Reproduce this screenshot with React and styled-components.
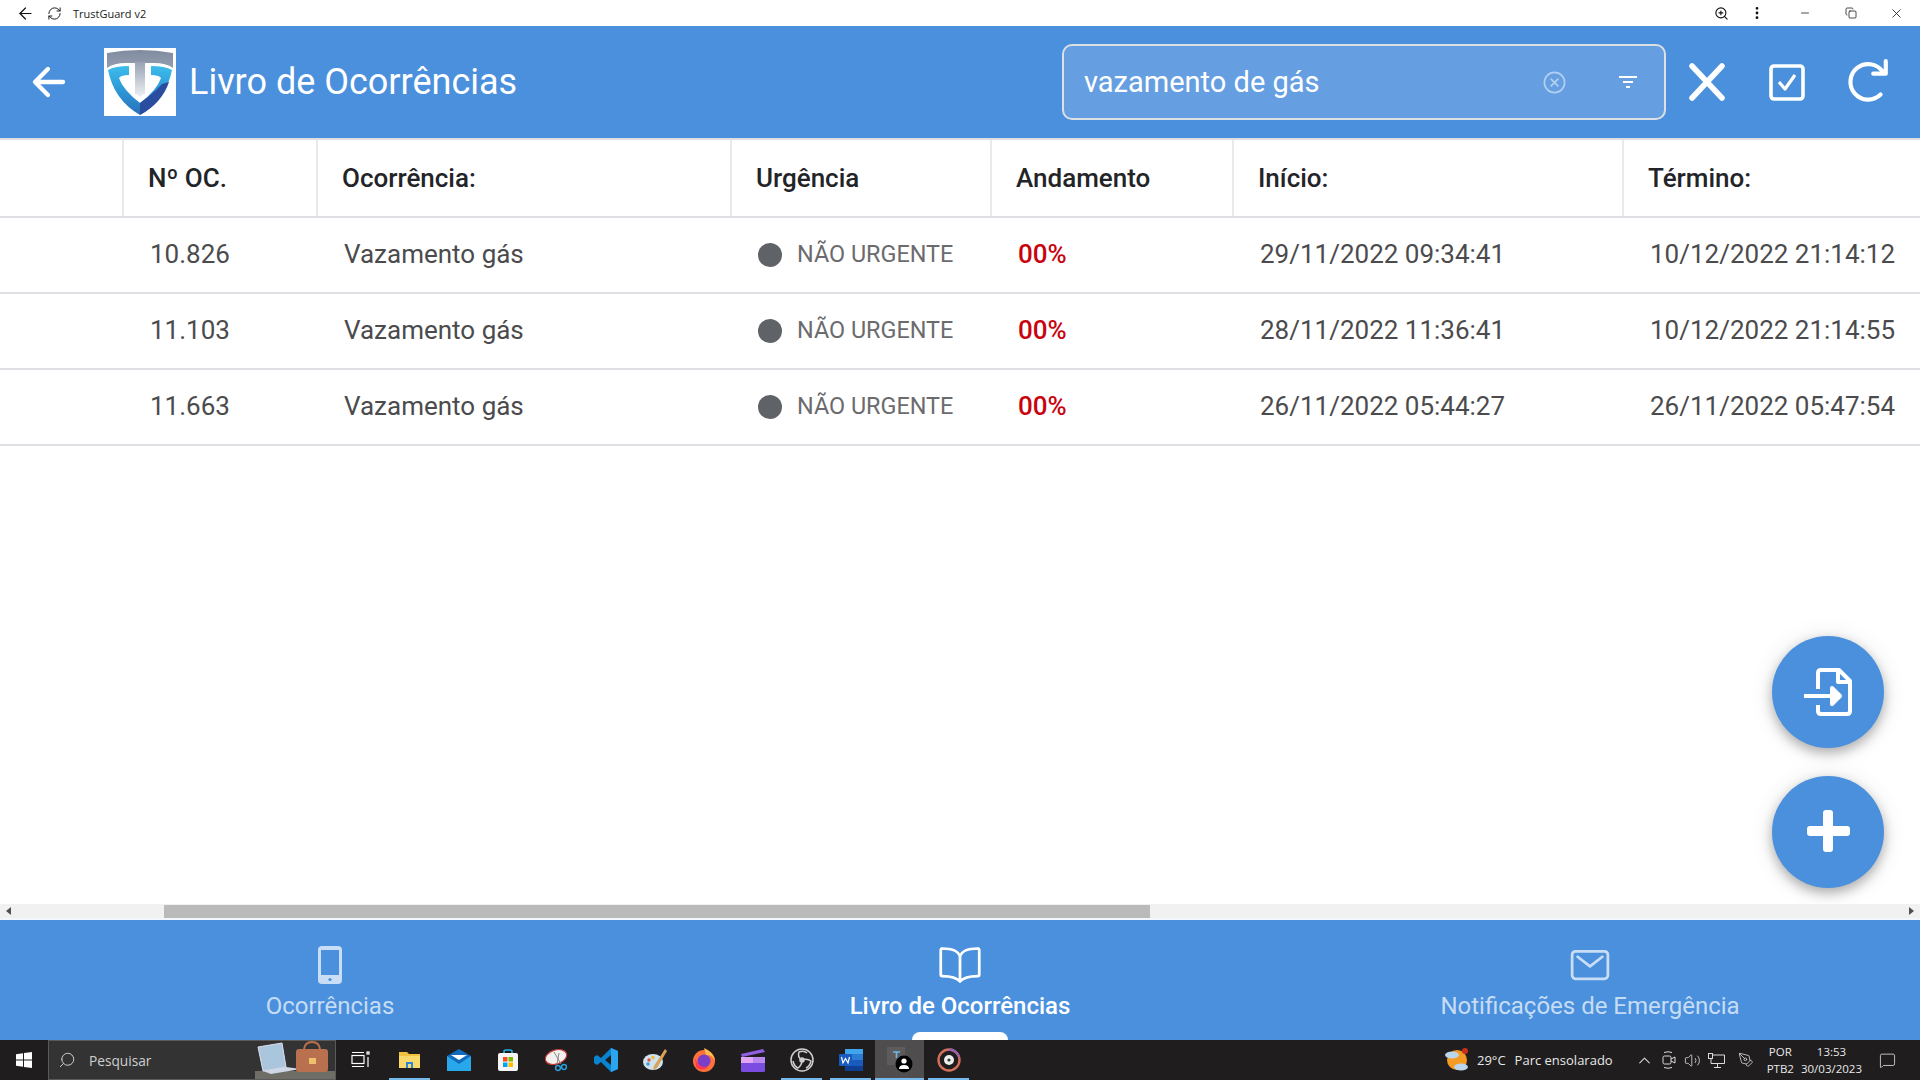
import React from "react";
import styled, { createGlobalStyle } from "styled-components";
import {
  IoArrowBack,
  IoCloseCircleOutline,
  IoBookOutline,
  IoMailOutline,
} from "react-icons/io5";
import {
  ArrowLeft,
  RefreshCw,
  ZoomIn,
  EllipsisVertical,
  Minus,
  Copy,
  X,
  Search,
  ChevronUp,
  Volume2,
  MessageSquare,
  PenTool,
} from "lucide-react";

const GlobalStyle = createGlobalStyle`
  * { box-sizing: border-box; }
  html, body { margin: 0; padding: 0; background: #fff; overflow: hidden; }
  body { font-family: Roboto, "Liberation Sans", sans-serif; }
`;

const Page = styled.div`
  display: flex;
  flex-direction: column;
  width: 1920px;
  height: 1080px;
`;

const TitleBar = styled.div`
  display: flex;
  align-items: center;
  height: 26px;
  flex: none;
  background: #fff;
  color: #111;
  padding: 0 14px 0 16px;
`;

const TitleBarText = styled.span`
  font-family: "Open Sans", "Liberation Sans", sans-serif;
  font-size: 11px;
  color: #222;
  margin-left: 9px;
`;

const TitleBarButton = styled.span`
  display: flex;
  align-items: center;
  justify-content: center;
  width: ${(p) => p.$w || 20}px;
  margin-left: ${(p) => p.$ml || 0}px;
`;

const Spacer = styled.div`
  flex: 1;
`;

const Header = styled.header`
  display: flex;
  align-items: center;
  height: 112px;
  flex: none;
  background: #4a90dd;
  color: #fff;
  padding-left: 26px;
`;

const BackButton = styled.span`
  display: flex;
  font-size: 46px;
  width: 78px;
`;

const LogoBox = styled.div`
  width: 72px;
  height: 68px;
  background: #fff;
  flex: none;
`;

const PageTitle = styled.h1`
  margin: 0 0 0 13px;
  font-size: 36px;
  font-weight: 400;
  flex: 1;
`;

const SearchBox = styled.div`
  display: flex;
  align-items: center;
  width: 604px;
  height: 76px;
  border: 2px solid #dcdfe3;
  border-radius: 10px;
  background: #659fe1;
  padding: 0 20px;
`;

const SearchText = styled.span`
  flex: 1;
  font-size: 29px;
`;

const ClearIcon = styled.span`
  display: flex;
  font-size: 27px;
  opacity: 0.5;
  margin-right: 49px;
  position: relative;
  left: -2px;
`;

const FilterIcon = styled.svg`
  width: 18px;
  height: 12px;
  margin-right: 7px;
`;

const HeaderActions = styled.div`
  display: flex;
  align-items: center;
  width: 254px;
  padding-left: 1px;
`;

const HeaderAction = styled.span`
  display: flex;
  justify-content: center;
  width: 80px;
`;

const Content = styled.main`
  position: relative;
  flex: 1;
  overflow: hidden;
  background: #fff;
`;

const columns = "122px 194px 414px 260px 242px 390px 298px";

const HeadRow = styled.div`
  display: grid;
  grid-template-columns: ${columns};
  height: 80px;
  border-top: 2px solid #dfe0e4;
  border-bottom: 2px solid #dfe0e4;
`;

const HeadCell = styled.div`
  display: flex;
  align-items: center;
  padding-left: 24px;
  font-size: 26px;
  font-weight: 500;
  color: #222428;
  border-left: ${(p) => (p.$first ? "0" : "2px solid #e9e9ea")};
`;

const Row = styled.div`
  display: grid;
  grid-template-columns: ${columns};
  height: 76px;
  border-bottom: 2px solid #dfe0e4;
`;

const Cell = styled.div`
  display: flex;
  align-items: center;
  padding: 0 0 2px 28px;
  font-size: 26px;
  color: #4b4b4d;
  white-space: nowrap;
`;

const UrgencyDot = styled.span`
  width: 24px;
  height: 24px;
  border-radius: 50%;
  background: #5f6368;
  margin: 1px 15px 0 0;
  flex: none;
`;

const UrgencyLabel = styled.span`
  font-size: 23.4px;
  color: #6b6b6e;
`;

const Percent = styled.span`
  font-weight: 500;
  color: #c8030f;
`;

const Fab = styled.button`
  position: absolute;
  right: 36px;
  bottom: ${(p) => p.$bottom}px;
  width: 112px;
  height: 112px;
  border: 0;
  border-radius: 50%;
  background: #4a90dd;
  color: #fff;
  display: flex;
  align-items: center;
  justify-content: center;
  box-shadow: 0 5px 12px rgba(0, 0, 0, 0.28), 0 2px 24px rgba(0, 0, 0, 0.1);
`;

const ScrollTrack = styled.div`
  display: flex;
  align-items: center;
  justify-content: space-between;
  height: 16px;
  flex: none;
  background: #f1f1f1;
  border-bottom: 2px solid #f4f8fc;
  padding: 0 6px;
  position: relative;
`;

const ScrollThumb = styled.div`
  position: absolute;
  left: 164px;
  top: 1px;
  width: 986px;
  height: 13px;
  background: #bababa;
`;

const ScrollArrow = styled.span`
  width: 0;
  height: 0;
  border-top: 4px solid transparent;
  border-bottom: 4px solid transparent;
  border-left: ${(p) => (p.$right ? "5px solid #505050" : "0")};
  border-right: ${(p) => (p.$right ? "0" : "5px solid #505050")};
`;

const BottomNav = styled.nav`
  display: grid;
  grid-template-columns: repeat(3, 1fr);
  height: 120px;
  flex: none;
  background: #4a90dd;
  padding: 0 15px;
`;

const Tab = styled.div`
  position: relative;
  display: flex;
  flex-direction: column;
  align-items: center;
  padding-top: 25px;
  color: ${(p) => (p.$active ? "#fff" : "rgba(255, 255, 255, 0.7)")};
`;

const TabIcon = styled.span`
  display: flex;
  align-items: center;
  justify-content: center;
  height: 40px;
  font-size: 44px;
`;

const TabLabel = styled.span`
  margin-top: 7px;
  font-size: 24px;
  font-weight: ${(p) => (p.$active ? 500 : 400)};
`;

const TabIndicator = styled.span`
  position: absolute;
  bottom: 0;
  left: 50%;
  width: 96px;
  height: 8px;
  margin-left: -48px;
  background: #fff;
  border-radius: 8px 8px 0 0;
`;

const Taskbar = styled.footer`
  display: flex;
  align-items: center;
  height: 40px;
  flex: none;
  background: #1f1d1e;
  color: #e8e8e8;
  font-family: "Open Sans", "Noto Sans", sans-serif;
  font-size: 13px;
`;

const StartButton = styled.div`
  display: flex;
  align-items: center;
  justify-content: center;
  width: 48px;
  height: 40px;
`;

const TaskSearch = styled.div`
  position: relative;
  display: flex;
  align-items: center;
  width: 288px;
  height: 40px;
  background: #333;
  border: 1px solid #5a5a5a;
  padding-left: 9px;
  color: #cfcfcf;
  font-size: 13.7px;
  gap: 13px;
`;

const SearchArt = styled.svg`
  position: absolute;
  right: 0;
  bottom: 0;
`;

const TaskItem = styled.div`
  position: relative;
  display: flex;
  align-items: center;
  justify-content: center;
  width: 49px;
  height: 40px;
  background: ${(p) => (p.$active ? "#4f4d4e" : "transparent")};
  &::after {
    content: "";
    display: ${(p) => (p.$open ? "block" : "none")};
    position: absolute;
    left: ${(p) => (p.$active ? 0 : 4)}px;
    right: ${(p) => (p.$active ? 0 : 4)}px;
    bottom: 0;
    height: 2px;
    background: #76b9ed;
  }
`;

const Tray = styled.div`
  display: flex;
  align-items: center;
  margin-left: auto;
  height: 40px;
  padding-right: 21px;
`;

const WeatherText = styled.span`
  font-size: 13px;
  margin-left: ${(p) => p.$ml || 0}px;
  white-space: nowrap;
`;

const TrayIcon = styled.span`
  display: flex;
  justify-content: center;
  width: 24px;
  margin-left: ${(p) => p.$ml || 0}px;
  color: #dcdcdc;
`;

const TrayStack = styled.div`
  display: flex;
  flex-direction: column;
  align-items: center;
  font-size: 11.5px;
  line-height: 17px;
  margin-left: ${(p) => p.$ml || 0}px;
`;

const rows = [
  ["10.826", "29/11/2022 09:34:41", "10/12/2022 21:14:12"],
  ["11.103", "28/11/2022 11:36:41", "10/12/2022 21:14:55"],
  ["11.663", "26/11/2022 05:44:27", "26/11/2022 05:47:54"],
];

function Logo() {
  return (
    <svg width="72" height="68" viewBox="0 0 72 68">
      <defs>
        <linearGradient id="metal" x1="0" y1="0" x2="0" y2="1">
          <stop offset="0" stopColor="#7f8ba0" />
          <stop offset="1" stopColor="#b5bcc8" />
        </linearGradient>
        <linearGradient id="stem" x1="0" y1="0" x2="0" y2="1">
          <stop offset="0" stopColor="#98a2b3" />
          <stop offset="1" stopColor="#eef0f4" />
        </linearGradient>
        <linearGradient id="sky" x1="0" y1="0" x2="0" y2="1">
          <stop offset="0" stopColor="#3dbdec" />
          <stop offset="0.55" stopColor="#2c93d4" />
          <stop offset="1" stopColor="#2a70b9" />
        </linearGradient>
      </defs>
      <path d="M3 5 Q36 -1 69 5 L69 20 Q62 15 50 15 L41 15 L41 45 L36 48 L31 45 L31 15 L22 15 Q10 15 3 20 Z" fill="url(#metal)" />
      <path d="M31 14 H41 V45 L36 49 L31 45 Z" fill="url(#stem)" />
      <path d="M4 22 Q11 18 25 18 L25 27 Q17 27 15 30 Q19 42 36 55 L36 67 Q10 52 4 22 Z" fill="url(#sky)" />
      <path d="M68 22 Q61 18 47 18 L47 27 Q55 27 57 30 Q53 42 36 55 L36 67 Q62 52 68 22 Z" fill="url(#sky)" />
      <path d="M36 55 Q50 45 58 36 L65 34 Q58 55 36 67 Z" fill="#2b4d9f" />
    </svg>
  );
}

function CloseIcon() {
  return (
    <svg width="38" height="38" viewBox="0 0 38 38" fill="none" stroke="#fff" strokeWidth="5.5" strokeLinecap="round">
      <path d="M4 3 L34 35 M34 3 L4 35" />
    </svg>
  );
}

function CheckboxIcon() {
  return (
    <svg width="36" height="37" viewBox="0 0 36 37" fill="none" stroke="#fff" strokeLinejoin="round">
      <rect x="2" y="2" width="32" height="33" rx="3" strokeWidth="3.6" />
      <path d="M10 18 L16 25 L26 11" strokeWidth="3.2" />
    </svg>
  );
}

function RefreshIcon() {
  return (
    <svg width="48" height="48" viewBox="0 0 46 46" fill="none" stroke="#fff" strokeWidth="4" strokeLinecap="round" strokeLinejoin="round">
      <path d="M36 35 A17 17 0 1 1 38 13" />
      <path d="M41 3 V15 H29" />
    </svg>
  );
}

function FileArrow() {
  return (
    <svg width="48" height="50" viewBox="0 0 48 50" fill="none" stroke="#fff" strokeWidth="4" strokeLinejoin="round">
      <path d="M14 22 V6 Q14 3 17 3 H35 L46 14 V44 Q46 47 43 47 H17 Q14 47 14 44 V38" />
      <path d="M34 3 V15 H46" />
      <path d="M0 29 H30" />
      <path d="M28 21 L36 29 L28 37 Z" fill="#fff" />
    </svg>
  );
}

function PlusIcon() {
  return (
    <svg width="44" height="44" viewBox="0 0 44 44">
      <rect x="17" y="0" width="10" height="42" rx="3" fill="#fff" />
      <rect x="1" y="16" width="43" height="10" rx="3" fill="#fff" />
    </svg>
  );
}

function PhoneIcon() {
  return (
    <svg width="24" height="38" viewBox="0 0 24 38">
      <path fillRule="evenodd" d="M4 0 H20 Q24 0 24 4 V34 Q24 38 20 38 H4 Q0 38 0 34 V4 Q0 0 4 0 Z M3 4 V29 H21 V4 Z" fill="currentColor" />
      <circle cx="12" cy="33.5" r="1.6" fill="#4a90dd" />
    </svg>
  );
}

function WindowsIcon() {
  return (
    <svg width="16" height="16" viewBox="0 0 16 16" fill="#fff">
      <path d="M0 2.3 7 1.3 V7.6 H0 Z M8 1.1 16 0 V7.6 H8 Z M0 8.4 H7 V14.7 L0 13.7 Z M8 8.4 H16 V16 L8 14.9 Z" />
    </svg>
  );
}

function TaskView() {
  return (
    <svg width="20" height="18" viewBox="0 0 20 18" fill="none" stroke="#fff" strokeWidth="1.2">
      <rect x="1" y="4.5" width="12" height="8" />
      <path d="M1 1.5 H13 M1 15.5 H13" />
      <rect x="16" y="1" width="2" height="2" />
      <path d="M17 6 V16" />
    </svg>
  );
}

function Explorer() {
  return (
    <svg width="22" height="18" viewBox="0 0 22 18">
      <path d="M0 1 H8 L10 3 H21 V17 H0 Z" fill="#f2c23e" />
      <path d="M0 5 H21 V17 H0 Z" fill="#fbd96a" />
      <path d="M7 17 V11 H14 V17 H12 V13 H9 V17 Z" fill="#2b87d8" />
    </svg>
  );
}

function MailIcon() {
  return (
    <svg width="24" height="22" viewBox="0 0 24 22">
      <path d="M0 7 L12 0 L24 7 V22 H0 Z" fill="#0f6cbd" />
      <path d="M0 7 L12 15 L24 7 V22 H0 Z" fill="#28a8ea" />
      <path d="M4 6 H20 L12 11 Z" fill="#fff" />
    </svg>
  );
}

function StoreIcon() {
  return (
    <svg width="20" height="22" viewBox="0 0 20 22">
      <path d="M6 5 V2 Q6 1 8 1 H12 Q14 1 14 2 V5" fill="none" stroke="#25b4e8" strokeWidth="1.6" />
      <rect x="0" y="4" width="20" height="18" rx="2" fill="#f5f5f5" />
      <rect x="5" y="8" width="4.5" height="4.5" fill="#f25022" />
      <rect x="10.5" y="8" width="4.5" height="4.5" fill="#7fba00" />
      <rect x="5" y="13.5" width="4.5" height="4.5" fill="#00a4ef" />
      <rect x="10.5" y="13.5" width="4.5" height="4.5" fill="#ffb900" />
    </svg>
  );
}

function SnipIcon() {
  return (
    <svg width="24" height="24" viewBox="0 0 24 24">
      <ellipse cx="11" cy="9" rx="11" ry="7" fill="#f4f0ee" stroke="#c43d3d" strokeWidth="1.2" transform="rotate(-18 11 9)" />
      <path d="M9 4 L16 16 M14 5 L12 16" stroke="#888" strokeWidth="1" />
      <circle cx="13" cy="20" r="2.4" fill="none" stroke="#2b9cd8" strokeWidth="1.5" />
      <circle cx="19" cy="19" r="2.4" fill="none" stroke="#2b9cd8" strokeWidth="1.5" />
    </svg>
  );
}

function VsCode() {
  return (
    <svg width="24" height="24" viewBox="0 0 24 24">
      <path d="M17 0 L24 3 V21 L17 24 L7 14 L3 17 L0 15 V9 L3 7 L7 10 Z M17 7 L11 12 L17 17 Z" fill="#0a84d0" />
      <path d="M17 0 L24 3 V21 L17 24 Z" fill="#2aa5ee" />
    </svg>
  );
}

function PaintIcon() {
  return (
    <svg width="24" height="24" viewBox="0 0 24 24">
      <ellipse cx="10" cy="14" rx="10" ry="8" fill="#cfe3ef" />
      <circle cx="6" cy="12" r="1.7" fill="#e94d3d" />
      <circle cx="10" cy="9.5" r="1.7" fill="#f2b632" />
      <circle cx="5" cy="16" r="1.7" fill="#3f9ad6" />
      <path d="M22 1 L24 3 L14 20 L10 22 L11 18 Z" fill="#d9a35a" />
    </svg>
  );
}

function FirefoxIcon() {
  return (
    <svg width="24" height="24" viewBox="0 0 24 24">
      <circle cx="12" cy="13" r="11" fill="#ff7139" />
      <path d="M12 0 Q22 4 23 13 Q20 6 14 7 Z" fill="#ffbd4f" />
      <circle cx="12" cy="13" r="6.5" fill="#7b3ec9" />
      <path d="M3 10 Q6 20 16 19 Q10 24 4 19 Z" fill="#ff3750" />
    </svg>
  );
}

function ClipIcon() {
  return (
    <svg width="24" height="24" viewBox="0 0 24 24">
      <path d="M0 6 L22 1 L24 4 L1 9 Z" fill="#8f5fe0" />
      <rect x="0" y="9" width="24" height="15" rx="1.5" fill="#7a4de0" />
      <rect x="0" y="9" width="12" height="6" fill="#e0a6f5" />
      <rect x="12" y="9" width="12" height="6" fill="#b988ee" />
    </svg>
  );
}

function ObsIcon() {
  return (
    <svg width="24" height="24" viewBox="0 0 24 24" fill="none" stroke="#cfcfcf" strokeWidth="1.5">
      <circle cx="12" cy="12" r="11" />
      <path d="M12 12 Q7 9 9 4 Q14 2 17 5 M12 12 Q17 10 21 13 Q20 18 16 20 M12 12 Q12 17 8 20 Q4 18 3 13" />
      <circle cx="12" cy="12" r="2" fill="#cfcfcf" />
    </svg>
  );
}

function WordIcon() {
  return (
    <svg width="24" height="22" viewBox="0 0 24 22">
      <rect x="6" y="0" width="18" height="22" rx="1.5" fill="#2b7cd3" />
      <rect x="6" y="11" width="18" height="6" fill="#185abd" />
      <rect x="6" y="17" width="18" height="5" fill="#103f91" />
      <rect x="6" y="0" width="18" height="5" fill="#41a5ee" />
      <rect x="0" y="5" width="13" height="12" rx="1" fill="#185abd" />
      <path d="M2.5 8 L4 14 L6.5 9.5 L9 14 L10.5 8" stroke="#fff" strokeWidth="1.2" fill="none" />
    </svg>
  );
}

function TrustGuardTask() {
  return (
    <svg width="26" height="26" viewBox="0 0 26 26">
      <rect x="0" y="0" width="18" height="18" fill="#5d5b5c" />
      <path d="M6 5 H13 M9.5 5 V11" stroke="#6fb6e8" strokeWidth="1.6" />
      <circle cx="17" cy="17" r="8.5" fill="#000" />
      <circle cx="17" cy="14" r="2.6" fill="#fff" />
      <path d="M12 22 Q12 18 17 18 Q22 18 22 22 Z" fill="#fff" />
    </svg>
  );
}

function DiscIcon() {
  return (
    <svg width="24" height="24" viewBox="0 0 24 24" fill="none">
      <circle cx="12" cy="12" r="10.5" stroke="#d2705a" strokeWidth="2.4" />
      <path d="M12 1.5 A10.5 10.5 0 0 1 22 9" stroke="#8f62b5" strokeWidth="2.4" />
      <circle cx="12" cy="12" r="5" fill="#eee" />
      <circle cx="12" cy="12" r="1.6" fill="#333" />
    </svg>
  );
}

function WeatherIcon() {
  return (
    <svg width="26" height="26" viewBox="0 0 26 26">
      <circle cx="13" cy="13" r="10" fill="#f59a23" />
      <circle cx="21" cy="4" r="3" fill="#c8301e" />
      <ellipse cx="8" cy="8" rx="7" ry="3.5" fill="#b9d6ec" />
      <ellipse cx="17" cy="20" rx="7" ry="3.5" fill="#b9d6ec" />
    </svg>
  );
}

function MeetIcon() {
  return (
    <svg width="14" height="18" viewBox="0 0 14 18" fill="none" stroke="#dcdcdc" strokeWidth="1">
      <path d="M2 1.5 Q6 0 10 1.5 M2 16.5 Q6 18 10 16.5" />
      <rect x="1" y="5" width="8" height="8" rx="1.5" />
      <path d="M9 8 L13 6 V12 L9 10" />
    </svg>
  );
}

function NetworkIcon() {
  return (
    <svg width="17" height="15" viewBox="0 0 17 15" fill="none" stroke="#dcdcdc" strokeWidth="1">
      <rect x="0.5" y="0.5" width="4" height="5" fill="#1f1d1e" />
      <path d="M4.5 2 H16.5 V10.5 H3 V5.5 M9.5 10.5 V14 M6 14.5 H13" />
    </svg>
  );
}

export default function App() {
  return (
    <Page>
      <GlobalStyle />
      <TitleBar>
        <ArrowLeft size={19} strokeWidth={1.5} />
        <TitleBarButton $ml={9}>
          <RefreshCw size={15} strokeWidth={1.5} />
        </TitleBarButton>
        <TitleBarText>TrustGuard v2</TitleBarText>
        <Spacer />
        <TitleBarButton>
          <ZoomIn size={15} strokeWidth={1.8} />
        </TitleBarButton>
        <TitleBarButton $ml={16}>
          <EllipsisVertical size={16} strokeWidth={2.2} />
        </TitleBarButton>
        <TitleBarButton $ml={28}>
          <Minus size={12} strokeWidth={1.5} />
        </TitleBarButton>
        <TitleBarButton $ml={26}>
          <Copy size={12} strokeWidth={1.5} />
        </TitleBarButton>
        <TitleBarButton $ml={25}>
          <X size={15} strokeWidth={1.3} />
        </TitleBarButton>
      </TitleBar>

      <Header>
        <BackButton>
          <IoArrowBack />
        </BackButton>
        <LogoBox>
          <Logo />
        </LogoBox>
        <PageTitle>Livro de Ocorrências</PageTitle>
        <SearchBox>
          <SearchText>vazamento de gás</SearchText>
          <ClearIcon>
            <IoCloseCircleOutline />
          </ClearIcon>
          <FilterIcon viewBox="0 0 18 12" fill="#fff">
            <rect x="0" y="0" width="18" height="2" />
            <rect x="4" y="5" width="10" height="2" />
            <rect x="7" y="10" width="4" height="2" />
          </FilterIcon>
        </SearchBox>
        <HeaderActions>
          <HeaderAction>
            <CloseIcon />
          </HeaderAction>
          <HeaderAction>
            <CheckboxIcon />
          </HeaderAction>
          <HeaderAction>
            <RefreshIcon />
          </HeaderAction>
        </HeaderActions>
      </Header>

      <Content>
        <HeadRow>
          <HeadCell $first />
          <HeadCell>Nº OC.</HeadCell>
          <HeadCell>Ocorrência:</HeadCell>
          <HeadCell>Urgência</HeadCell>
          <HeadCell>Andamento</HeadCell>
          <HeadCell>Início:</HeadCell>
          <HeadCell>Término:</HeadCell>
        </HeadRow>
        {rows.map(([id, start, end]) => (
          <Row key={id}>
            <Cell />
            <Cell>{id}</Cell>
            <Cell>Vazamento gás</Cell>
            <Cell>
              <UrgencyDot />
              <UrgencyLabel>NÃO URGENTE</UrgencyLabel>
            </Cell>
            <Cell>
              <Percent>00%</Percent>
            </Cell>
            <Cell>{start}</Cell>
            <Cell>{end}</Cell>
          </Row>
        ))}
        <Fab $bottom={156}>
          <FileArrow />
        </Fab>
        <Fab $bottom={16}>
          <PlusIcon />
        </Fab>
      </Content>

      <ScrollTrack>
        <ScrollArrow />
        <ScrollThumb />
        <ScrollArrow $right />
      </ScrollTrack>

      <BottomNav>
        <Tab>
          <TabIcon>
            <PhoneIcon />
          </TabIcon>
          <TabLabel>Ocorrências</TabLabel>
        </Tab>
        <Tab $active>
          <TabIcon>
            <IoBookOutline />
          </TabIcon>
          <TabLabel $active>Livro de Ocorrências</TabLabel>
          <TabIndicator />
        </Tab>
        <Tab>
          <TabIcon>
            <IoMailOutline />
          </TabIcon>
          <TabLabel>Notificações de Emergência</TabLabel>
        </Tab>
      </BottomNav>

      <Taskbar>
        <StartButton>
          <WindowsIcon />
        </StartButton>
        <TaskSearch>
          <Search size={18} strokeWidth={1.3} style={{ transform: "scaleX(-1)" }} />
          Pesquisar
          <SearchArt width="80" height="38" viewBox="0 0 80 38">
            <rect x="0" y="30" width="80" height="8" fill="#6f6e66" />
            <path d="M3 6 L27 2 L31 26 L8 30 Z" fill="#a9c6dc" stroke="#dde" />
            <path d="M8 30 L31 26 L46 28 L16 33 Z" fill="#cfd8e6" />
            <rect x="41" y="8" width="32" height="23" rx="3" fill="#b9704f" />
            <path d="M49 8 Q50 1 57 1 Q64 1 65 8" fill="none" stroke="#b9704f" strokeWidth="2" />
            <rect x="54" y="17" width="7" height="6" fill="#eec06b" />
          </SearchArt>
        </TaskSearch>
        <TaskItem><TaskView /></TaskItem>
        <TaskItem $open><Explorer /></TaskItem>
        <TaskItem><MailIcon /></TaskItem>
        <TaskItem><StoreIcon /></TaskItem>
        <TaskItem><SnipIcon /></TaskItem>
        <TaskItem><VsCode /></TaskItem>
        <TaskItem><PaintIcon /></TaskItem>
        <TaskItem><FirefoxIcon /></TaskItem>
        <TaskItem><ClipIcon /></TaskItem>
        <TaskItem $open><ObsIcon /></TaskItem>
        <TaskItem $open><WordIcon /></TaskItem>
        <TaskItem $open $active><TrustGuardTask /></TaskItem>
        <TaskItem $open><DiscIcon /></TaskItem>
        <Tray>
          <WeatherIcon />
          <WeatherText $ml={7}>29°C</WeatherText>
          <WeatherText $ml={9}>Parc ensolarado</WeatherText>
          <TrayIcon $ml={20}><ChevronUp size={19} strokeWidth={1.3} /></TrayIcon>
          <TrayIcon><MeetIcon /></TrayIcon>
          <TrayIcon><Volume2 size={17} strokeWidth={1.2} /></TrayIcon>
          <TrayIcon><NetworkIcon /></TrayIcon>
          <TrayIcon $ml={5}><PenTool size={16} strokeWidth={1.2} /></TrayIcon>
          <TrayStack $ml={9}>
            <span>POR</span>
            <span>PTB2</span>
          </TrayStack>
          <TrayStack $ml={7}>
            <span>13:53</span>
            <span>30/03/2023</span>
          </TrayStack>
          <TrayIcon $ml={13}><MessageSquare size={17} strokeWidth={1.2} /></TrayIcon>
        </Tray>
      </Taskbar>
    </Page>
  );
}
